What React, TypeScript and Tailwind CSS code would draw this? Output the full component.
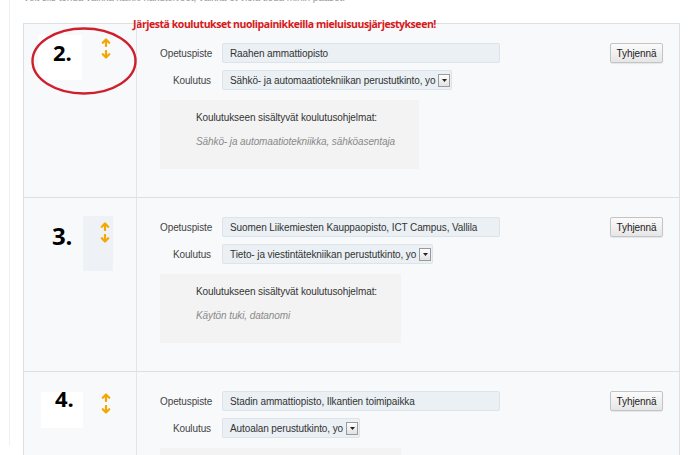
import React from "react";

type Row = {
  num: string;
  school: string;
  degree: string;
  programs: string;
  left: "circle" | "shaded" | "white";
};

const rows: Row[] = [
  {
    num: "2.",
    school: "Raahen ammattiopisto",
    degree: "Sähkö- ja automaatiotekniikan perustutkinto, yo",
    programs: "Sähkö- ja automaatiotekniikka, sähköasentaja",
    left: "circle",
  },
  {
    num: "3.",
    school: "Suomen Liikemiesten Kauppaopisto, ICT Campus, Vallila",
    degree: "Tieto- ja viestintätekniikan perustutkinto, yo",
    programs: "Käytön tuki, datanomi",
    left: "shaded",
  },
  {
    num: "4.",
    school: "Stadin ammattiopisto, Ilkantien toimipaikka",
    degree: "Autoalan perustutkinto, yo",
    programs: "Autoalan perustutkinto",
    left: "white",
  },
];

function Arrows() {
  return (
    <div className="flex flex-col gap-[3px]">
      <svg width="10" height="9" viewBox="0 0 10 9">
        <path d="M5 8V2M1.8 4.8L5 1.5L8.2 4.8" fill="none" stroke="#f4a700" strokeWidth="2.2" strokeLinecap="round" strokeLinejoin="round" />
      </svg>
      <svg width="10" height="9" viewBox="0 0 10 9">
        <path d="M5 1V7M1.8 4.2L5 7.5L8.2 4.2" fill="none" stroke="#f4a700" strokeWidth="2.2" strokeLinecap="round" strokeLinejoin="round" />
      </svg>
    </div>
  );
}

function Num({ children }: { children: string }) {
  return (
    <span className="font-['Open_Sans',sans-serif] text-[22px] font-bold leading-none text-black">
      {children}
    </span>
  );
}

function LeftCell({ row }: { row: Row }) {
  if (row.left === "circle") {
    return (
      <div className="relative flex w-[113px] shrink-0 items-start border-r border-[#e2e4e8]">
        <div className="ml-[14px] mt-[11px] h-[45px] w-[44px] bg-white pl-[15px] pt-[6px]">
          <Num>{row.num}</Num>
        </div>
        <div className="ml-[19px] mt-[14px]">
          <Arrows />
        </div>
        <svg className="pointer-events-none absolute left-[6px] top-[2px]" width="108" height="70" viewBox="0 0 108 70">
          <ellipse cx="54" cy="35" rx="51.5" ry="32.5" fill="none" stroke="#cf1f2c" strokeWidth="2.4" />
        </svg>
      </div>
    );
  }
  if (row.left === "shaded") {
    return (
      <div className="flex w-[113px] shrink-0 items-start border-r border-[#e2e4e8]">
        <div className="ml-[28px] mt-[26px]">
          <span className="font-['Open_Sans',sans-serif] text-[24px] font-bold leading-none text-black">{row.num}</span>
        </div>
        <div className="ml-[11px] mt-[18px] h-[55px] w-[30px] bg-[#eef2f6] pl-[17px] pt-[6px]">
          <Arrows />
        </div>
      </div>
    );
  }
  return (
    <div className="flex w-[113px] shrink-0 items-start border-r border-[#e2e4e8]">
      <div className="ml-[17px] mt-[20px] h-[36px] w-[42px] bg-white pl-[14px]">
        <div className="-mt-[5px]">
          <Num>{row.num}</Num>
        </div>
      </div>
      <div className="ml-[18px] mt-[21px]">
        <Arrows />
      </div>
    </div>
  );
}

function FormRow({ row }: { row: Row }) {
  return (
    <div className="flex border-t border-[#dcdfe3]">
      <LeftCell row={row} />
      <div className="flex flex-1 items-start pb-[28px] pl-[23px] pr-[16px] pt-[19px]">
        <div className="flex flex-1 flex-col">
          <div className="flex items-center gap-[11px]">
            <span className="w-[51px] text-right text-[#444]">Opetuspiste</span>
            <div className="flex h-[20px] w-[278px] items-center whitespace-nowrap rounded-[2px] border border-[#dde4e9] bg-[#eaf0f4] pl-[7px] text-[#333]">
              {row.school}
            </div>
          </div>
          <div className="mt-[7px] flex items-center gap-[11px]">
            <span className="w-[51px] text-right text-[#444]">Koulutus</span>
            <div className="flex h-[20px] items-center gap-[3px] whitespace-nowrap rounded-[2px] border border-[#dde4e9] bg-[#eaf0f4] pl-[7px] pr-[1px] text-[#333]">
              <span>{row.degree}</span>
              <span className="flex h-[13px] w-[12px] items-center justify-center border border-[#9a9a9a] bg-gradient-to-b from-[#fdfdfd] to-[#e2e2e2]">
                <svg width="5" height="3" viewBox="0 0 5 3">
                  <path d="M0 0H5L2.5 3Z" fill="#222" />
                </svg>
              </span>
            </div>
          </div>
          <div className="mt-[10px] self-start bg-[#f3f3f3] pb-[21px] pl-[36px] pr-[24px] pt-[11px]">
            <p className="text-[#333]">Koulutukseen sisältyvät koulutusohjelmat:</p>
            <p className="mt-[11px] italic text-[#8a8a8a]">{row.programs}</p>
          </div>
        </div>
        <button className="h-[20px] w-[53px] rounded-[2px] border border-[#c4c4c4] bg-gradient-to-b from-[#fbfbfb] to-[#e6e6e6] text-[#222] shadow-[0_1px_1px_rgba(0,0,0,0.08)]">
          Tyhjennä
        </button>
      </div>
    </div>
  );
}

export default function App() {
  return (
    <div className="h-[455px] w-[700px] overflow-hidden bg-white font-['Liberation_Sans',Arial,sans-serif] text-[10px] leading-[13px] tracking-[-0.1px]">
      <div className="ml-[9px] h-full border-l border-[#f0f0f0]">
        <p className="-mt-[9px] ml-[13px] h-[13px] text-[#999]">
          Voit siis tehdä vaikka kaikki hakutoiveet, vaikka et vielä tiedä mihin pääset.
        </p>
        <p className="ml-[123px] mt-[13px] h-[14px] font-['Open_Sans',sans-serif] text-[10.5px] font-bold leading-[14px] tracking-[-0.45px] text-[#d71920]">
          Järjestä koulutukset nuolipainikkeilla mieluisuusjärjestykseen!
        </p>
        <div className="-mt-[8px] ml-[13px] w-[657px] border-x border-b border-[#dcdfe3] bg-[#f8f9fb]">
          {rows.map((r) => (
            <FormRow key={r.num} row={r} />
          ))}
        </div>
      </div>
    </div>
  );
}
